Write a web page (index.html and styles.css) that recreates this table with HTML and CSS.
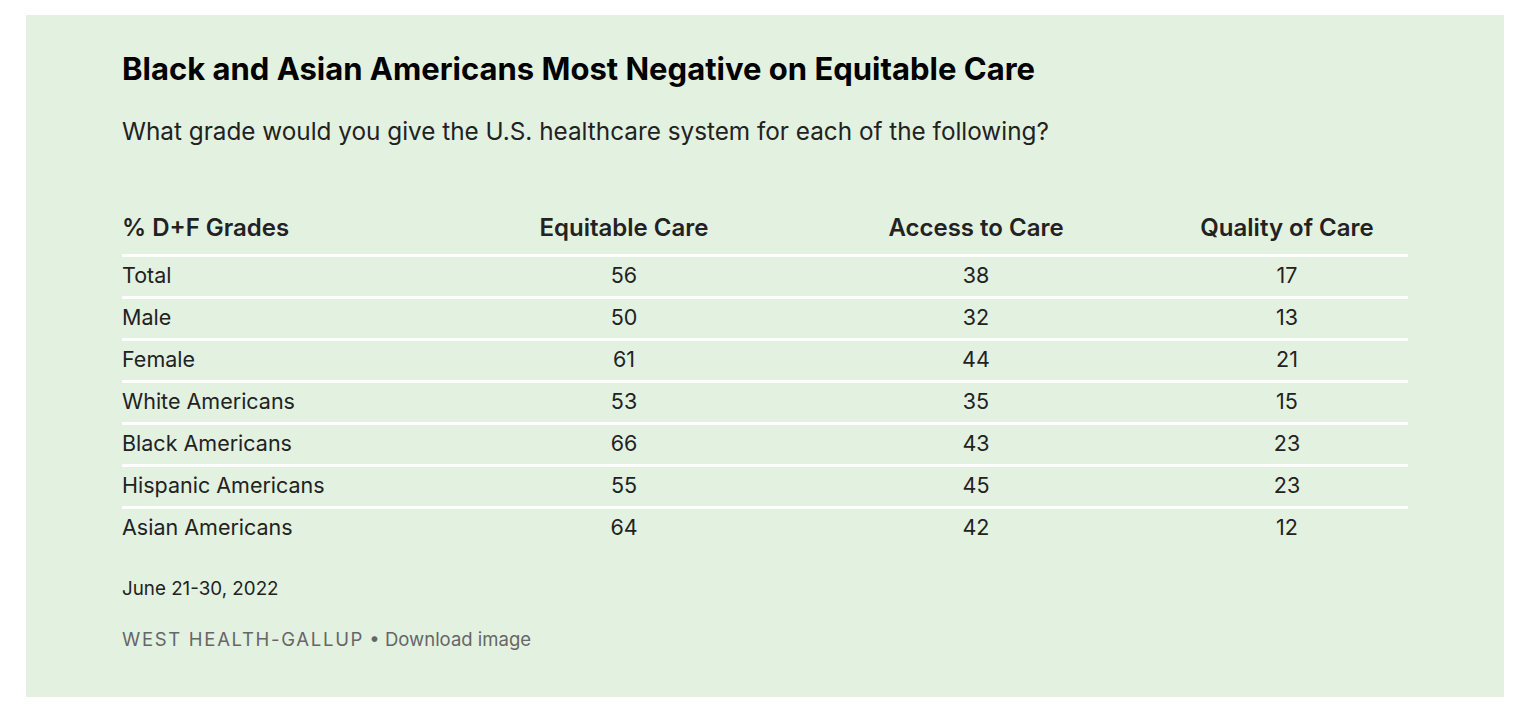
FILE: index.html
```html
<!DOCTYPE html>
<html lang="en">
<head>
<meta charset="utf-8">
<title>Black and Asian Americans Most Negative on Equitable Care</title>
<link rel="stylesheet" href="styles.css">
</head>
<body>
<section class="card">
  <h1 class="title">Black and Asian Americans Most Negative on Equitable Care</h1>
  <p class="subtitle">What grade would you give the U.S. healthcare system for each of the following?</p>
  <div class="table">
    <div class="row head">
      <div class="cell first">% D+F Grades</div>
      <div class="cell">Equitable Care</div>
      <div class="cell">Access to Care</div>
      <div class="cell">Quality of Care</div>
    </div>
    <div class="row"><div class="cell first">Total</div><div class="cell">56</div><div class="cell">38</div><div class="cell">17</div></div>
    <div class="row"><div class="cell first">Male</div><div class="cell">50</div><div class="cell">32</div><div class="cell">13</div></div>
    <div class="row"><div class="cell first">Female</div><div class="cell">61</div><div class="cell">44</div><div class="cell">21</div></div>
    <div class="row"><div class="cell first">White Americans</div><div class="cell">53</div><div class="cell">35</div><div class="cell">15</div></div>
    <div class="row"><div class="cell first">Black Americans</div><div class="cell">66</div><div class="cell">43</div><div class="cell">23</div></div>
    <div class="row"><div class="cell first">Hispanic Americans</div><div class="cell">55</div><div class="cell">45</div><div class="cell">23</div></div>
    <div class="row"><div class="cell first">Asian Americans</div><div class="cell">64</div><div class="cell">42</div><div class="cell">12</div></div>
  </div>
  <p class="date">June 21-30, 2022</p>
  <p class="source"><span class="org">WEST HEALTH-GALLUP</span> <span class="dl">• Download image</span></p>
</section>
</body>
</html>
```

FILE: styles.css
```css
html, body {
  margin: 0;
  padding: 0;
  background: #ffffff;
}
body {
  font-family: Inter, "Liberation Sans", sans-serif;
  color: #222222;
}
.card {
  box-sizing: border-box;
  width: 1478px;
  height: 682px;
  margin: 15px 0 0 26px;
  background: #e3f1e1;
  padding: 36px 96px 0 96px;
}
.title {
  margin: 0;
  font-size: 31px;
  line-height: 36px;
  font-weight: 700;
  color: #000000;
}
.subtitle {
  margin: 29px 0 0 0;
  font-size: 24.3px;
  line-height: 30px;
  font-weight: 400;
  color: #222222;
}
.table {
  margin-top: 63px;
  width: 1286px;
}
.row {
  display: grid;
  grid-template-columns: 340px 324px 380px 242px;
  align-items: center;
  height: 36px;
  padding-bottom: 3px;
  border-top: 3px solid #ffffff;
  font-size: 21.5px;
}
.row.head {
  border-top: none;
  height: 36px;
  font-size: 24px;
  font-weight: 600;
  border-bottom: 3px solid #ffffff;
  padding-bottom: 9px;
}
.row.head + .row {
  border-top: none;
}
.cell {
  text-align: center;
}
.cell.first {
  text-align: left;
}
.date {
  margin: 29px 0 0 0;
  font-size: 18.8px;
  line-height: 24px;
  color: #222222;
}
.source {
  margin: 26px 0 0 0;
  font-size: 18.5px;
  line-height: 24px;
  color: #666666;
}
.org {
  letter-spacing: 1.7px;
}
```
